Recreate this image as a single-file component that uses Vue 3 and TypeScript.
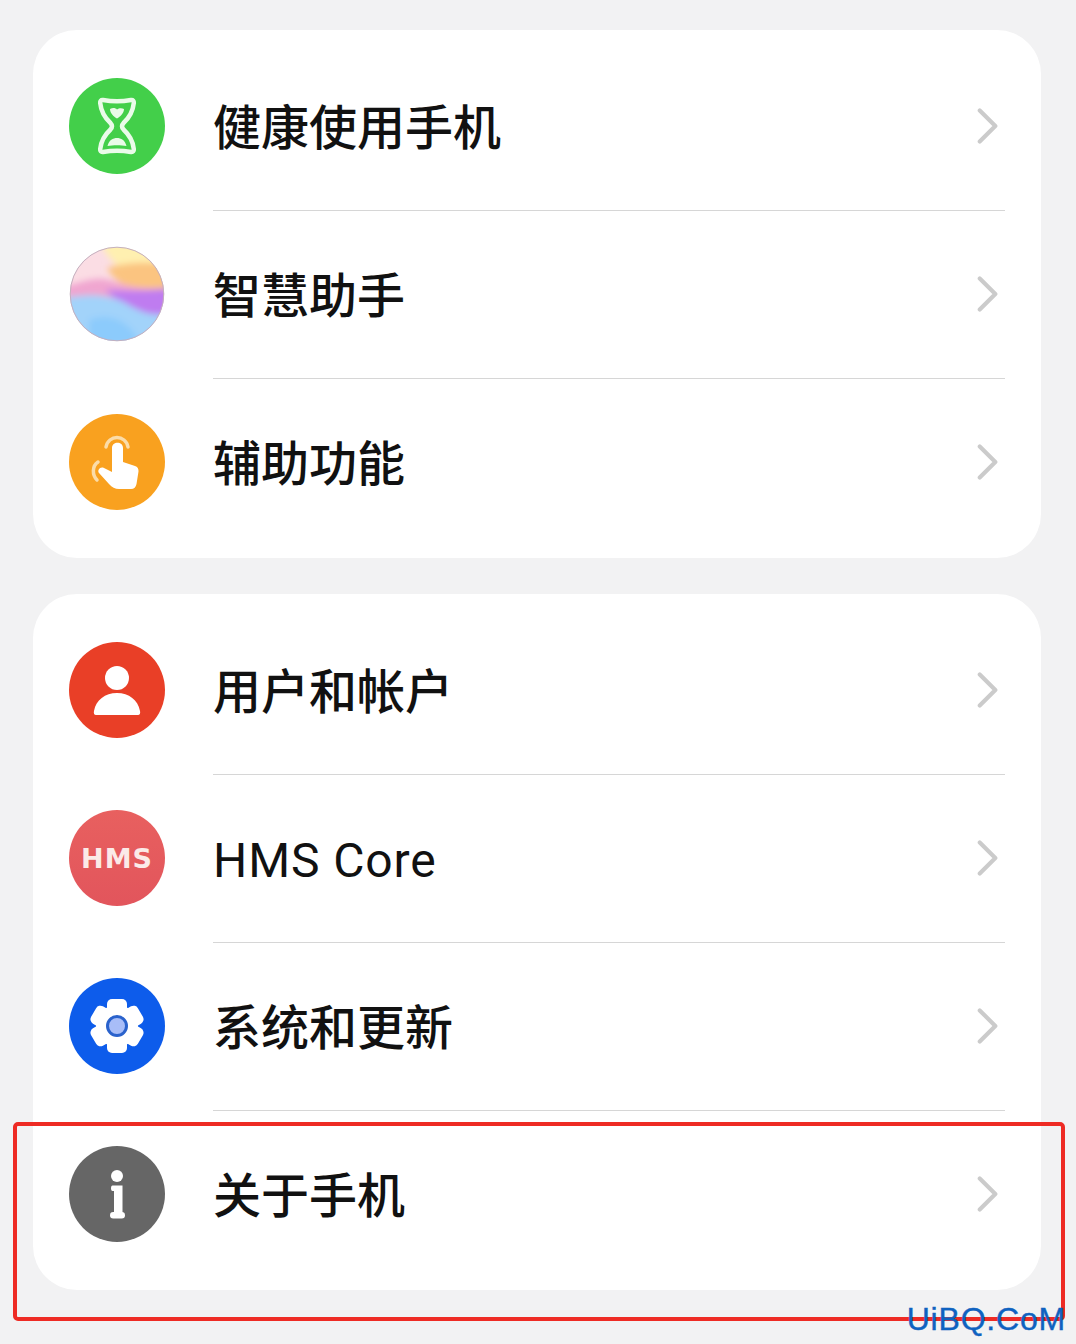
<template>
  <div class="page">
    <section v-for="(group, g) in groups" :key="g" class="card">
      <div v-for="item in group" :key="item.name" class="row">
        <div class="icon" :class="item.icon">
          <svg v-if="item.icon === 'health'" viewBox="0 0 96 96">
            <path d="M34 22C42 23.500 54 23.500 62 22C64 21.700 65 23 64.800 25C64 33 60.500 39.500 54.500 45C52.500 47 52.500 49.500 54.500 51.500C60.500 57 64 63.500 64.800 71C65 73 64 74.300 62 74C54 72.500 42 72.500 34 74C32 74.300 31 73 31.200 71C32 63.500 35.500 57 41.500 51.500C43.500 49.500 43.500 47 41.500 45C35.500 39.500 32 33 31.200 25C31 23 32 21.700 34 22Z" fill="none" stroke="#eafbe9" stroke-width="4.500" stroke-linejoin="round" />
            <path d="M41 31C44 29.500 46.500 30 48 31.500C50 29.800 53 29.800 55 31C55 35 51.500 38.500 48 40.500C44.500 38.500 41 35 41 31Z" fill="#eafbe9" />
            <path d="M38.500 68C40 62 44 60 48 60C52 60 56 62 57.500 68C52 67 44 67 38.500 68Z" fill="#eafbe9" />
          </svg>
          <svg v-else-if="item.icon === 'assist'" viewBox="0 0 96 96">
            <defs>
              <clipPath id="ball"><circle cx="48" cy="48" r="47" /></clipPath>
              <filter id="soft" x="-20%" y="-20%" width="140%" height="140%"><feGaussianBlur stdDeviation="3" /></filter>
            </defs>
            <g clip-path="url(#ball)">
              <rect width="96" height="96" fill="#fbdde4" />
              <g filter="url(#soft)">
                <path d="M30 -6H100V30C84 36 62 30 52 22C44 16 36 8 30 -6Z" fill="#fff0b0" />
                <path d="M38 22C56 16 78 16 100 18V44C78 50 50 44 38 22Z" fill="#fbc480" />
                <path d="M-4 40C14 36 26 30 40 34C54 38 66 44 100 42V62L-4 56Z" fill="#f0a6d0" />
                <path d="M36 44C56 44 76 46 100 42V68C76 72 58 64 36 44Z" fill="#bf7cf0" />
                <path d="M-4 52C18 48 34 48 50 54C64 60 76 72 100 68V100H-4Z" fill="#a2d3fa" />
                <path d="M20 74C40 66 62 74 72 100H20Z" fill="#8ccbfc" />
              </g>
            </g>
            <circle cx="48" cy="48" r="46.800" fill="none" stroke="#c4b0bf" stroke-width="1" />
          </svg>
          <svg v-else-if="item.icon === 'access'" viewBox="0 0 96 96">
            <path d="M37 33C38 27 43 23.500 48 23.500C53 23.500 58 27 59 33" fill="none" stroke="#fbdca8" stroke-width="3.500" stroke-linecap="round" />
            <path d="M29 48C23 52 23 61 28 66" fill="none" stroke="#fbdca8" stroke-width="3.500" stroke-linecap="round" />
            <path d="M43 34C43 27 54 27 54 34V48L66 52C68.500 52.800 69.800 55 69.500 57.500L67.500 70C67 73 65 75 62 75H50C46 75 43 73.500 40 70L30 59C28 56.500 31 52 35 54L43 58Z" fill="#fff" />
          </svg>
          <svg v-else-if="item.icon === 'user'" viewBox="0 0 96 96">
            <circle cx="48" cy="36" r="12" fill="#fff" />
            <path d="M27 73C25 73 24.500 71 25 69C27 58 36 51 48 51C60 51 69 58 71 69C71.500 71 71 73 69 73Z" fill="#fff" />
          </svg>
          <span v-else-if="item.icon === 'hms'" class="hms-text">HMS</span>
          <svg v-else-if="item.icon === 'system'" viewBox="0 0 96 96">
            <circle cx="48" cy="48" r="21" fill="#fff" />
            <rect v-for="a in [0, 60, 120]" :key="a" x="38" y="21" width="20" height="54" rx="5" fill="#fff" :transform="`rotate(${a} 48 48)`" />
            <circle cx="48" cy="48" r="9.500" fill="#a8bdf8" stroke="#2a62cc" stroke-width="3" />
          </svg>
          <svg v-else viewBox="0 0 96 96">
            <circle cx="48" cy="30" r="6" fill="#fff" />
            <path d="M43.500 39.500H53.500V67H45V45H43.500C41.500 45 41.500 39.500 43.500 39.500Z" fill="#fff" />
            <rect x="41" y="66" width="15" height="6.500" rx="3.250" fill="#fff" />
          </svg>
        </div>
        <div class="body">
          <span class="name" :class="{ latin: item.icon === 'hms' }">{{ item.name }}</span>
          <svg class="chevron" viewBox="0 0 24 40">
            <path d="M3 3L20 20L3 37" fill="none" stroke="#cbcbcb" stroke-width="4.500" stroke-linecap="round" stroke-linejoin="round" />
          </svg>
        </div>
      </div>
    </section>
    <div class="highlight"></div>
    <div class="mark">UiBQ.CoM</div>
  </div>
</template>

<script setup lang="ts">
interface Item {
  name: string
  icon: string
}

const groups: Item[][] = [
  [
    { name: '健康使用手机', icon: 'health' },
    { name: '智慧助手', icon: 'assist' },
    { name: '辅助功能', icon: 'access' },
  ],
  [
    { name: '用户和帐户', icon: 'user' },
    { name: 'HMS Core', icon: 'hms' },
    { name: '系统和更新', icon: 'system' },
    { name: '关于手机', icon: 'about' },
  ],
]
</script>

<style scoped>
.page {
  position: relative;
  width: 1076px;
  height: 1344px;
  box-sizing: border-box;
  padding: 30px 35px 0 33px;
  display: flex;
  flex-direction: column;
  gap: 36px;
  overflow: hidden;
  background: #f2f2f3;
  font-family: "Roboto", "Noto Sans CJK SC", sans-serif;
}
.card {
  padding: 12px 0;
  background: #fff;
  border-radius: 44px;
}
.row {
  display: flex;
  align-items: stretch;
  height: 168px;
  padding-left: 36px;
}
.icon {
  flex: none;
  width: 96px;
  height: 96px;
  margin: 36px 48px 0 0;
  border-radius: 50%;
  display: flex;
  align-items: center;
  justify-content: center;
}
.icon svg {
  display: block;
  width: 96px;
  height: 96px;
}
.health { background: #43cf4a; }
.access { background: #f9a11f; }
.user { background: #e93f27; }
.hms { background: linear-gradient(180deg, #e8605f, #e2555c); }
.system { background: #0d5ceb; }
.about { background: #666666; }
.hms-text {
  color: #fbeae8;
  font-family: "DejaVu Sans", sans-serif;
  font-size: 27px;
  font-weight: 700;
  letter-spacing: 1px;
}
.body {
  flex: 1;
  display: flex;
  align-items: center;
  justify-content: space-between;
  margin: 0 36px -1px 0;
  padding-right: 6px;
  border-bottom: 1px solid #d6d6d6;
}
.row:last-child .body {
  margin-bottom: 0;
  border-bottom: none;
}
.name {
  padding-top: 6px;
  color: #111;
  font-size: 48px;
  font-weight: 500;
  line-height: 60px;
}
.latin {
  font-weight: 400;
  letter-spacing: 0.9px;
}
.chevron {
  width: 22px;
  height: 38px;
}
.highlight {
  position: absolute;
  left: 13px;
  top: 1122px;
  width: 1052px;
  height: 199px;
  box-sizing: border-box;
  border: 4px solid #ee2b24;
  border-radius: 5px;
}
.mark {
  position: absolute;
  right: 10px;
  top: 1300px;
  color: #0f62c0;
  font-family: "Liberation Sans", sans-serif;
  font-size: 32px;
  line-height: 38px;
  letter-spacing: 0.8px;
  -webkit-text-stroke: 0.4px #0f62c0;
}
</style>

<style>
body {
  margin: 0;
}
</style>
